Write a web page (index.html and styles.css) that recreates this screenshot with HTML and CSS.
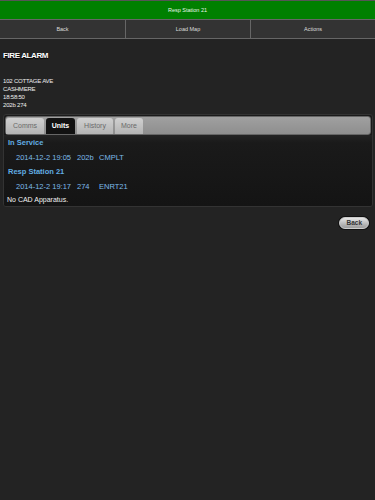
FILE: index.html
```html
<!DOCTYPE html>
<html lang="en">
<head>
  <meta charset="UTF-8">
  <meta name="viewport" content="width=device-width, initial-scale=1.0">
  <title>Resp Station 21</title>
  <link rel="stylesheet" href="styles.css">
</head>
<body>
  <!-- Barra de titulo -->
  <div class="title-bar">Resp Station 21</div>

  <!-- Navegacao -->
  <div class="nav-bar">
    <div class="nav-item">Back</div>
    <div class="nav-item">Load Map</div>
    <div class="nav-item">Actions</div>
  </div>

  <div class="incident">
    <div class="incident-type">FIRE ALARM</div>
    <div class="incident-info">
      102 COTTAGE AVE<br>
      CASHMERE<br>
      18:58:50<br>
      202b 274
    </div>
  </div>

  <!-- Painel de abas -->
  <div class="panel">
    <div class="tab-strip">
      <div class="tab">Comms</div>
      <div class="tab active">Units</div>
      <div class="tab">History</div>
      <div class="tab">More</div>
    </div>
    <div class="panel-body">
      <div class="group-title">In Service</div>
      <div class="unit-row"><span class="col-date">2014-12-2 19:05</span><span class="col-unit">202b</span><span>CMPLT</span></div>
      <div class="group-title">Resp Station 21</div>
      <div class="unit-row"><span class="col-date">2014-12-2 19:17</span><span class="col-unit">274</span><span>ENRT21</span></div>
      <div class="no-cad">No CAD Apparatus.</div>
    </div>
  </div>

  <div class="footer">
    <div class="back-button">Back</div>
  </div>
</body>
</html>
```

FILE: styles.css
```css
body {
  margin: 0;
  padding: 0;
  height: 500px;
  background: #232323;
  font-family: 'Liberation Sans', Arial, sans-serif;
  color: #fff;
}

/* Barra de titulo */
.title-bar {
  height: 18px;
  line-height: 18px;
  border-top: 1px solid #555;
  background: #008000;
  color: #e8f4e8;
  font-size: 5.5px;
  text-align: center;
}

/* Navegacao */
.nav-bar {
  display: grid;
  grid-template-columns: 125px 125px 1fr;
  height: 18px;
  background: #333;
  border-top: 1px solid #666;
  border-bottom: 1px solid #666;
}

.nav-item {
  line-height: 18px;
  font-size: 5.5px;
  color: #ddd;
  text-align: center;
  border-left: 1px solid #666;
}

.nav-item:first-child {
  border-left: none;
}

/* Ocorrencia */
.incident {
  padding: 12px 3px 0;
}

.incident-type {
  font-size: 8px;
  font-weight: bold;
  letter-spacing: -0.4px;
  color: #fff;
  text-shadow: 0 1px 1px #000;
}

.incident-info {
  margin-top: 17px;
  font-size: 6px;
  line-height: 8px;
  letter-spacing: -0.2px;
  color: #eee;
}

/* Painel de abas */
.panel {
  margin: 5px 2px 0 3px;
  border: 1px solid #333;
  border-radius: 3px;
  background: #1a1a1a;
  overflow: hidden;
}

.tab-strip {
  display: flex;
  gap: 2px;
  margin: 1px 1px 0;
  padding: 1px 0 0;
  height: 16px;
  border-radius: 3px;
  border: 1px solid #666;
  background: linear-gradient(to bottom, #a0a0a0, #8e8e8e);
}

.tab {
  box-sizing: border-box;
  line-height: 15px;
  font-size: 7px;
  color: #6a6a6a;
  text-align: center;
  border-radius: 3px 3px 0 0;
  background: linear-gradient(to bottom, #d0d0d0, #b4b4b4);
}

.tab:nth-child(1) { width: 38px; }
.tab:nth-child(2) { width: 29px; }
.tab:nth-child(3) { width: 36px; }
.tab:nth-child(4) { width: 28px; }

.tab.active {
  background: #111;
  color: #fff;
  font-weight: bold;
}

.panel-body {
  padding: 1px 3px 0;
  background: linear-gradient(to bottom, #232323 0, #1a1a1a 8px, #141414 100%);
}

.group-title {
  font-size: 7.5px;
  font-weight: bold;
  color: #62aee4;
  line-height: 14px;
  padding-left: 1px;
}

.unit-row {
  display: flex;
  padding-left: 9px;
  font-size: 7.5px;
  color: #7dbbea;
  line-height: 15px;
}

.col-date {
  width: 61px;
}

.col-unit {
  width: 22px;
}

.no-cad {
  font-size: 7px;
  color: #f2f2f2;
  line-height: 12px;
}

/* Rodape */
.footer {
  display: flex;
  justify-content: flex-end;
  padding: 10px 6px 0;
}

.back-button {
  padding: 0 6px;
  height: 10px;
  line-height: 10px;
  font-size: 6.5px;
  font-weight: bold;
  color: #333;
  border: 1px solid #ccc;
  border-radius: 6px;
  background: linear-gradient(to bottom, #e6e6e6, #9a9a9a);
  box-shadow: 0 0 0 1px #111;
}
```
